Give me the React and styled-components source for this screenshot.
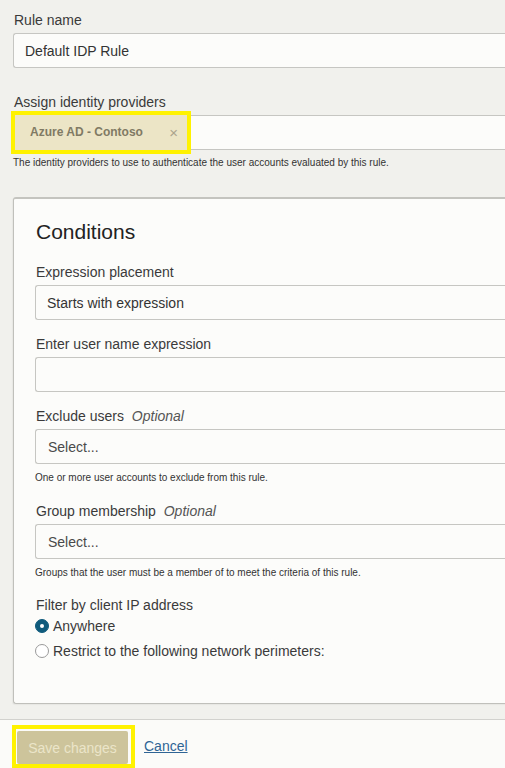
import React from 'react';
import styled, { createGlobalStyle } from 'styled-components';

const GlobalStyle = createGlobalStyle`
  html, body {
    margin: 0;
    padding: 0;
    background: #f1f1ed;
    overflow: hidden;
  }
  body {
    font-family: "Liberation Sans", Arial, sans-serif;
    color: #333;
  }
`;

const App = () => (
  <>
    <GlobalStyle />
    <Page>
      <Main>
        <Label>Rule name</Label>
        <TextBox>Default IDP Rule</TextBox>

        <Label top={25}>Assign identity providers</Label>
        <TagBox>
          <Highlight offset={-3}>
            <Tag>
              Azure AD - Contoso
              <TagClose>×</TagClose>
            </Tag>
          </Highlight>
        </TagBox>
        <Help>The identity providers to use to authenticate the user accounts evaluated by this rule.</Help>

        <Card>
          <Heading>Conditions</Heading>

          <Label top={18}>Expression placement</Label>
          <TextBox>Starts with expression</TextBox>

          <Label top={15}>Enter user name expression</Label>
          <TextBox />

          <Label top={15}>
            Exclude users <Optional>Optional</Optional>
          </Label>
          <TextBox placeholder>Select...</TextBox>
          <Help top={7}>One or more user accounts to exclude from this rule.</Help>

          <Label top={17}>
            Group membership <Optional>Optional</Optional>
          </Label>
          <TextBox placeholder>Select...</TextBox>
          <Help top={7}>Groups that the user must be a member of to meet the criteria of this rule.</Help>

          <Label top={16}>Filter by client IP address</Label>
          <RadioRow top={-1}>
            <Radio checked />
            Anywhere
          </RadioRow>
          <RadioRow top={7}>
            <Radio />
            Restrict to the following network perimeters:
          </RadioRow>
        </Card>
      </Main>

      <Footer>
        <Highlight pad="2px 3px 0 1px">
          <SaveButton type="button">Save changes</SaveButton>
        </Highlight>
        <CancelLink href="#">Cancel</CancelLink>
      </Footer>
    </Page>
  </>
);

const Page = styled.div`
  width: 640px;
  min-height: 768px;
  display: flex;
  flex-direction: column;
`;

const Main = styled.div`
  padding: 11px 0 15px 13px;
  display: flex;
  flex-direction: column;
  border-bottom: 1px solid #d2d2ce;
`;

const Label = styled.div`
  font-size: 14px;
  line-height: 18px;
  color: #3a3a3a;
  margin-top: ${({ top }) => top || 0}px;
  margin-bottom: 4px;
  padding-left: 1px;
`;

const Optional = styled.span`
  font-style: italic;
  color: #555;
  margin-left: 4px;
`;

const TextBox = styled.div`
  box-sizing: border-box;
  height: 35px;
  background: #fcfcfa;
  border: 1px solid #c6c6c2;
  border-right: none;
  border-radius: 3px 0 0 3px;
  display: flex;
  align-items: center;
  padding-left: ${({ placeholder }) => (placeholder ? 12 : 11)}px;
  font-size: 14px;
  color: ${({ placeholder }) => (placeholder ? '#4a4a4a' : '#333')};
`;

const TagBox = styled.div`
  box-sizing: border-box;
  height: 35px;
  background: #fcfcfa;
  border: 1px solid #c6c6c2;
  border-right: none;
  border-radius: 3px 0 0 3px;
  display: flex;
  align-items: center;
`;

const Highlight = styled.span`
  display: inline-flex;
  align-self: flex-start;
  border: 4px solid #fff200;
  padding: ${({ pad }) => pad || '0'};
  margin-left: ${({ offset }) => offset || 0}px;
  ${TagBox} & {
    align-self: center;
  }
`;

const Tag = styled.span`
  box-sizing: border-box;
  width: 172px;
  height: 35px;
  background: #ece5c6;
  color: #807a64;
  font-size: 12px;
  font-weight: bold;
  display: flex;
  align-items: center;
  justify-content: space-between;
  padding: 0 9px 1px 15px;
`;

const TagClose = styled.span`
  font-weight: normal;
  font-size: 15px;
  color: #aaa48d;
`;

const Help = styled.div`
  font-size: 10px;
  line-height: 14px;
  color: #333;
  margin-top: ${({ top }) => top || 6}px;
`;

const Card = styled.div`
  margin-top: 27px;
  background: #fcfcfa;
  border: 1px solid #c0c0bb;
  border-top: 2px solid #c4c4bf;
  border-right: none;
  border-radius: 3px 0 0 3px;
  box-shadow: -1px 1px 1px rgba(0, 0, 0, 0.04);
  padding: 20px 0 43px 21px;
  display: flex;
  flex-direction: column;
`;

const Heading = styled.h2`
  margin: 0;
  font-size: 21px;
  line-height: 26px;
  font-weight: normal;
  color: #222;
  padding-left: 1px;
`;

const RadioRow = styled.label`
  display: flex;
  align-items: center;
  gap: 4px;
  font-size: 14px;
  line-height: 18px;
  color: #3a3a3a;
  margin-top: ${({ top }) => top || 0}px;
`;

const Radio = styled.span`
  box-sizing: border-box;
  width: 14px;
  height: 14px;
  border-radius: 50%;
  flex-shrink: 0;
  background: ${({ checked }) => (checked ? '#0f5b7c' : '#fff')};
  border: 1px solid ${({ checked }) => (checked ? '#0f5b7c' : '#9a9a9a')};
  display: flex;
  align-items: center;
  justify-content: center;
  &::after {
    content: '';
    width: 4px;
    height: 4px;
    border-radius: 50%;
    background: #fff;
    display: ${({ checked }) => (checked ? 'block' : 'none')};
  }
`;

const Footer = styled.div`
  flex: 1;
  background: #fbfbf9;
  display: flex;
  align-items: flex-start;
  gap: 9px;
  padding: 5px 0 0 12px;
`;

const SaveButton = styled.button`
  box-sizing: border-box;
  width: 111px;
  height: 33px;
  border: none;
  border-radius: 2px;
  background: #cdc49b;
  color: #ebe5c9;
  font-family: "Liberation Sans", Arial, sans-serif;
  font-size: 14px;
  padding: 0;
`;

const CancelLink = styled.a`
  font-size: 14px;
  color: #2f6495;
  text-decoration: underline;
  margin-top: 13px;
`;

export default App;
